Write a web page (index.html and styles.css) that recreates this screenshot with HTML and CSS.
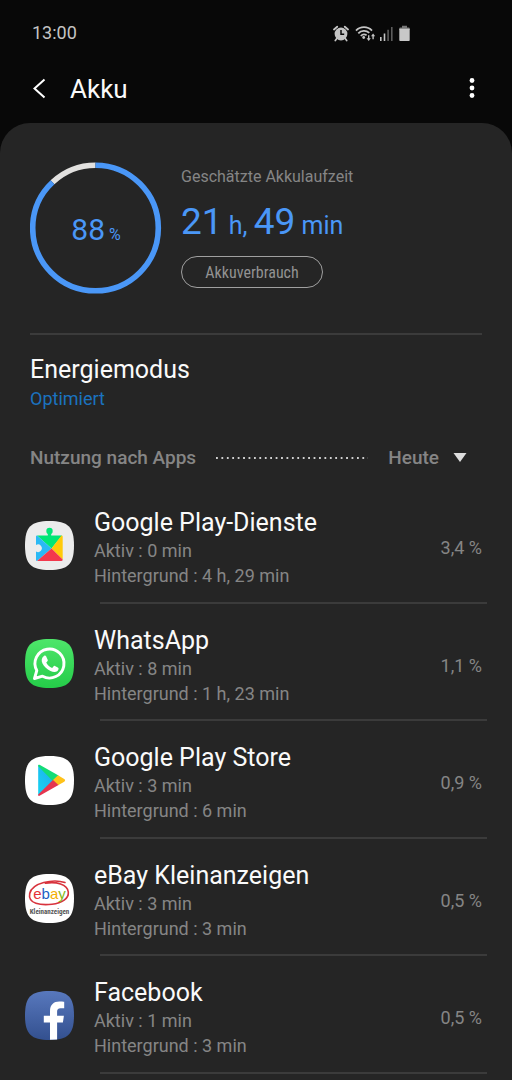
FILE: index.html
```html
<!DOCTYPE html>
<html lang="de">
<head>
<meta charset="utf-8">
<meta name="viewport" content="width=device-width, initial-scale=1">
<title>Akku</title>
<link rel="stylesheet" href="styles.css">
</head>
<body>
<div class="status-bar">
  <span class="clock">13:00</span>
  <div class="status-icons">
    <svg class="alarm" width="16" height="17" viewBox="0 0 16 17" aria-hidden="true">
      <circle cx="8" cy="9" r="6.4" fill="#c4c4c4"/>
      <path d="M1 4.5 4.2 1.7M15 4.5 11.8 1.7" stroke="#c4c4c4" stroke-width="1.8" stroke-linecap="round"/>
      <path d="M3.8 13.5 2.3 15.6M12.2 13.5 13.7 15.6" stroke="#c4c4c4" stroke-width="1.7" stroke-linecap="round"/>
      <path d="M8 5V9.3H11.2" fill="none" stroke="#080808" stroke-width="1.5"/>
    </svg>
    <svg class="wifi" width="20" height="17" viewBox="0 0 20 17" aria-hidden="true">
      <path d="M1 5.6A11 11 0 0 1 17 5.6M3.3 8.4A7.8 7.8 0 0 1 14.3 7.9M5.8 11A4.6 4.6 0 0 1 11.6 10.3" fill="none" stroke="#c4c4c4" stroke-width="1.8"/>
      <circle cx="8.7" cy="12.5" r="1.4" fill="#c4c4c4"/>
      <path d="M13 10.3h1.4v3h1.4l-2.1 2.8-2.1-2.8H13zM17.4 14.2v-3H16l2.1-2.8 2 2.8h-1.3v3z" fill="#c4c4c4"/>
    </svg>
    <svg class="signal" width="14" height="17" viewBox="0 0 14 17" aria-hidden="true">
      <path d="M1 12h1.6v4H1zM4.7 8.5h1.6V16H4.7z" fill="#c4c4c4"/>
      <path d="M8.3 4.8h1.6V16H8.3zM12 2h1.6v14H12z" fill="#5c5c5c"/>
    </svg>
    <svg class="battery" width="11" height="17" viewBox="0 0 11 17" aria-hidden="true">
      <path d="M3 .8h5v1.6h1.7a1 1 0 0 1 1 1V5H.3V3.4a1 1 0 0 1 1-1H3z" fill="#777"/>
      <path d="M.3 3.8h10.4V15.2a.8.8 0 0 1-.8.8H1.1a.8.8 0 0 1-.8-.8z" fill="#c8c8c8"/>
    </svg>
  </div>
</div>

<header class="app-bar">
  <button class="icon-button back" type="button" aria-label="Zurück">
    <svg width="14" height="22" viewBox="0 0 14 22"><path d="M12.500 1.500 2.500 10.500 12.500 19.500" fill="none" stroke="#fff" stroke-width="2"/></svg>
  </button>
  <h1 class="title">Akku</h1>
  <button class="icon-button more" type="button" aria-label="Weitere Optionen">
    <svg width="6" height="22" viewBox="0 0 6 22" fill="#fff"><circle cx="3" cy="2.500" r="2.4"/><circle cx="3" cy="10" r="2.4"/><circle cx="3" cy="17.500" r="2.4"/></svg>
  </button>
</header>

<main class="panel">
  <section class="summary">
    <div class="gauge">
      <svg class="ring" viewBox="0 0 132 132" fill="none" stroke-width="5.6" aria-hidden="true">
        <circle cx="65.500" cy="66" r="62.8" stroke="#e2e1df" pathLength="100" stroke-dasharray="0 88 12 0" transform="rotate(-90 65.500 66)"/>
        <circle cx="65.500" cy="66" r="62.8" stroke="#4a97f7" pathLength="100" stroke-dasharray="88 12" transform="rotate(-90 65.500 66)"/>
      </svg>
      <p class="level">88<span class="percent">%</span></p>
    </div>
    <div class="estimate">
      <h2 class="estimate-label">Geschätzte Akkulaufzeit</h2>
      <p class="estimate-time">21<span class="unit"> h, </span>49<span class="unit"> min</span></p>
      <button class="usage-button" type="button">Akkuverbrauch</button>
    </div>
  </section>

  <section class="mode">
    <h2 class="mode-title">Energiemodus</h2>
    <p class="mode-value">Optimiert</p>
  </section>

  <section class="usage">
    <div class="usage-head">
      <h2 class="usage-title">Nutzung nach Apps</h2>
      <span class="dots"></span>
      <button class="period" type="button">Heute
        <svg width="14" height="10" viewBox="0 0 14 10" aria-hidden="true"><path d="M.5 0h13L7 9z" fill="#dedede"/></svg>
      </button>
    </div>
    <ul class="apps">
      <li class="app">
        <svg class="app-icon" viewBox="0 0 49 49" aria-hidden="true">
          <path d="M24.500 0C43 0 49 6 49 24.500S43 49 24.500 49 0 43 0 24.500 6 0 24.500 0z" fill="#ececec"/>
          <path d="M12 14.500h25L26.500 27.500z" fill="#00e676"/>
          <circle cx="24.500" cy="10" r="3.200" fill="#00e676"/><path d="M22.800 11h3.400v5h-3.400z" fill="#00e676"/>
          <path d="M12 14.500 26.500 27.500 12 40a1 1 0 0 1-1-1v-8.500a3.800 3.800 0 1 0 0-6.500v-8.500a1 1 0 0 1 1-1z" fill="#2ab9f5"/>
          <path d="M36.500 14.500a1.200 1.200 0 0 1 1.200 1.200V38.500L26.500 27.500z" fill="#ffca0a"/>
          <path d="M12 40 26.500 27.500 37.700 38.500a1.500 1.500 0 0 1-1.500 1.500z" fill="#f3384d"/>
        </svg>
        <div class="app-text">
          <h3 class="app-name">Google Play-Dienste</h3>
          <p class="app-detail">Aktiv : 0 min</p>
          <p class="app-detail">Hintergrund : 4 h, 29 min</p>
        </div>
        <span class="app-share">3,4 %</span>
      </li>
      <li class="app">
        <svg class="app-icon" viewBox="0 0 49 49" aria-hidden="true">
          <defs><linearGradient id="wa" x2="0" y2="1"><stop stop-color="#4ee66a"/><stop offset="1" stop-color="#25cc49"/></linearGradient></defs>
          <path d="M24.500 0C43 0 49 6 49 24.500S43 49 24.500 49 0 43 0 24.500 6 0 24.500 0z" fill="url(#wa)"/>
          <path d="M9.500 39.500 11.800 31.500A14.500 14.500 0 1 1 17.500 37.200z" fill="none" stroke="#fff" stroke-width="2.900" stroke-linejoin="round"/>
          <path d="M19.200 16.800c.6-.3 1.500-.3 1.900.4l1.700 3.700c.3.700-1.300 2.200-1.600 2.700 1.200 2.600 3.200 4.300 5.900 5.400.6-.4 1.800-2.400 2.400-2.200l3.700 1.900c1 .6-.1 3-1 3.600-2 1.400-4.600.7-6.700-.3-3.600-1.800-6.400-4.400-8-7.600-1.500-2.700-.9-6 1.700-7.600z" fill="#fff"/>
        </svg>
        <div class="app-text">
          <h3 class="app-name">WhatsApp</h3>
          <p class="app-detail">Aktiv : 8 min</p>
          <p class="app-detail">Hintergrund : 1 h, 23 min</p>
        </div>
        <span class="app-share">1,1 %</span>
      </li>
      <li class="app">
        <svg class="app-icon" viewBox="0 0 49 49" aria-hidden="true">
          <defs><linearGradient id="play" x1="1" x2="0" y2="1"><stop stop-color="#20a9ee"/><stop offset="1" stop-color="#16d5f2"/></linearGradient></defs>
          <path d="M24.500 0C43 0 49 6 49 24.500S43 49 24.500 49 0 43 0 24.500 6 0 24.500 0z" fill="#fff"/>
          <path d="M13.200 9.500V39.500L29 24.500z" fill="url(#play)"/>
          <path d="M13 10c0-1.200 1-1.500 2-.9L33.500 19.500 28 25.200z" fill="#13dc76"/>
          <path d="M33 19.300 38.800 22.700c1.800 1 1.800 2.200 0 3.200L33 29.300 27.500 24.500z" fill="#ffc219"/>
          <path d="M28 23.900 33.500 29 15 39.600c-1 .6-2 .3-2-.8z" fill="#e5354f"/>
        </svg>
        <div class="app-text">
          <h3 class="app-name">Google Play Store</h3>
          <p class="app-detail">Aktiv : 3 min</p>
          <p class="app-detail">Hintergrund : 6 min</p>
        </div>
        <span class="app-share">0,9 %</span>
      </li>
      <li class="app">
        <svg class="app-icon" viewBox="0 0 49 49" aria-hidden="true">
          <path d="M24.500 0C43 0 49 6 49 24.500S43 49 24.500 49 0 43 0 24.500 6 0 24.500 0z" fill="#fff"/>
          <path d="M40 8.500C28 4.500 7 9 4.700 19.500 2.600 30 16 31.500 27 30.300 37 29.200 44 24.500 43.300 18 42.500 10.500 31 7.300 20.500 9.300" fill="none" stroke="#d8333d" stroke-width="1.600" stroke-linecap="round"/>
          <text class="ebay-word" x="24.500" y="25" text-anchor="middle"><tspan fill="#e53238">e</tspan><tspan fill="#1d5fc4">b</tspan><tspan fill="#f5af02">a</tspan><tspan fill="#86b817">y</tspan></text>
          <text class="ebay-sub" x="24.500" y="39.500" text-anchor="middle">Kleinanzeigen</text>
        </svg>
        <div class="app-text">
          <h3 class="app-name">eBay Kleinanzeigen</h3>
          <p class="app-detail">Aktiv : 3 min</p>
          <p class="app-detail">Hintergrund : 3 min</p>
        </div>
        <span class="app-share">0,5 %</span>
      </li>
      <li class="app">
        <svg class="app-icon" viewBox="0 0 49 49" aria-hidden="true">
          <defs><linearGradient id="fb" x2="0" y2="1"><stop stop-color="#5878bd"/><stop offset="1" stop-color="#33508f"/></linearGradient></defs>
          <path d="M24.500 0C43 0 49 6 49 24.500S43 49 24.500 49 0 43 0 24.500 6 0 24.500 0z" fill="url(#fb)"/>
          <path d="M25 48.800V31.500h-6.200v-6.700H25V20c0-6.300 3.800-9.500 9.300-9.500 2 0 3.800.1 4.900.3v6.400h-3.600c-2.700 0-3.500 1.300-3.500 3.300v4.300h6.800l-1 6.700h-5.800v17z" fill="#fff"/>
        </svg>
        <div class="app-text">
          <h3 class="app-name">Facebook</h3>
          <p class="app-detail">Aktiv : 1 min</p>
          <p class="app-detail">Hintergrund : 3 min</p>
        </div>
        <span class="app-share">0,5 %</span>
      </li>
    </ul>
  </section>
</main>
</body>
</html>
```
FILE: styles.css
```css
* { box-sizing: border-box; }

body {
  margin: 0;
  min-height: 100vh;
  display: flex;
  flex-direction: column;
  background: #080808;
  color: #fafafa;
  font-family: Roboto, "Liberation Sans", sans-serif;
}

h1, h2, h3, p, ul { margin: 0; padding: 0; font-weight: 400; }
ul { list-style: none; }
svg { display: block; flex: none; }

button {
  margin: 0;
  padding: 0;
  border: 0;
  background: none;
  color: inherit;
  font: inherit;
  cursor: pointer;
}

.status-bar {
  display: flex;
  align-items: center;
  justify-content: space-between;
  padding: 22px 102px 0 32px;
}

.clock { font-size: 18px; line-height: 22px; color: #c4c4c4; }
.status-icons { display: flex; align-items: center; gap: 6px; }
.wifi { margin-right: -2px; }

.app-bar {
  display: flex;
  align-items: center;
  padding: 27px 37px 16px 32px;
}

.title { margin-left: 24px; font-size: 26px; line-height: 36px; }
.more { margin-left: auto; }

.panel {
  flex: 1;
  padding-top: 39px;
  border-radius: 30px 30px 0 0;
  background: #252525;
}

.summary {
  display: flex;
  gap: 19px;
  margin: 0 30px;
  padding-bottom: 39px;
  border-bottom: 2px solid #3b3b3b;
}

.gauge {
  display: grid;
  place-items: center;
  width: 132px;
  height: 132px;
}

.ring, .level { grid-area: 1 / 1; }
.ring { width: 100%; }

.level {
  display: flex;
  align-items: baseline;
  gap: 4px;
  padding-top: 8px;
  font-size: 30px;
  line-height: 36px;
  color: #4a97f7;
}

.percent { font-size: 16px; }

.estimate { padding-top: 4px; }
.estimate-label { font-size: 16px; line-height: 22px; color: #858585; }
.estimate-time { margin-top: 12px; font-size: 37px; line-height: 44px; color: #4a97f7; }
.unit { font-size: 25px; }

.usage-button {
  margin-top: 8px;
  width: 142px;
  height: 32px;
  border: 1px solid #a0a0a0;
  border-radius: 16px;
  font-family: "Roboto Condensed", "Liberation Sans Narrow", Roboto, sans-serif;
  font-size: 16px;
  color: #929292;
}

.mode { padding: 19px 30px 0; }
.mode-title { font-size: 25px; line-height: 32px; }
.mode-value { font-size: 18px; line-height: 25px; color: #1b72bf; }

.usage-head {
  display: flex;
  align-items: center;
  gap: 20px;
  padding: 34px 45px 0 30px;
}

.usage-title, .period { font-size: 19px; line-height: 25px; font-weight: 500; color: #858585; }

.dots {
  flex: 1;
  height: 2px;
  background-image: linear-gradient(90deg, #d0d0d0 2px, transparent 2px);
  background-size: calc(100% / 28) 2px;
}

.period { display: flex; align-items: center; gap: 14px; }

.apps { padding-top: 16px; }

.app {
  display: flex;
  align-items: center;
  margin: 0 25px;
  padding: 21px 5px 16px 0;
  background: linear-gradient(#3b3b3b, #3b3b3b) 75px 100% / 100% 2px no-repeat;
}

.app:nth-child(even) { padding-bottom: 15px; }

.app-icon { width: 49px; height: 49px; margin-bottom: 4px; }
.app-text { flex: 1; margin-left: 20px; }
.app-name { font-size: 25px; line-height: 31px; }
.app-detail { font-size: 18px; line-height: 25px; color: #858585; }
.app-share { font-size: 18px; line-height: 25px; color: #858585; }

.ebay-word { font: 15px "Liberation Sans", sans-serif; }
.ebay-sub { font: bold 7px "Roboto Condensed", "Liberation Sans Narrow", sans-serif; fill: #555; }
```
